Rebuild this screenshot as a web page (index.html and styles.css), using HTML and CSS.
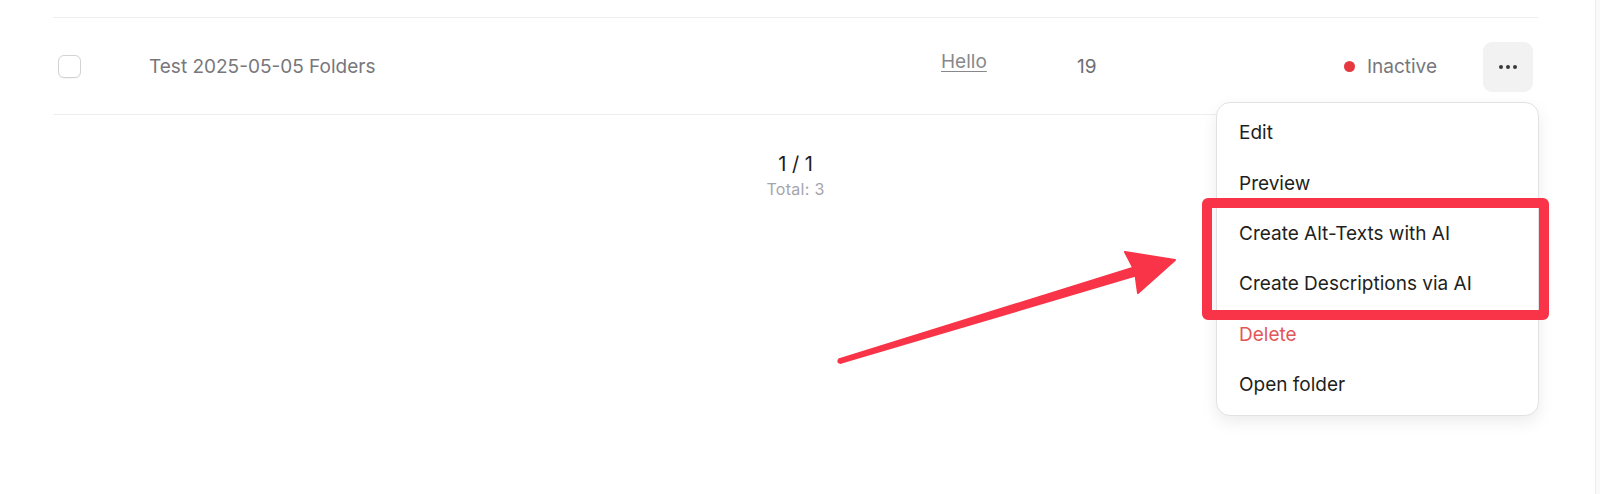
FILE: index.html
```html
<!DOCTYPE html>
<html lang="en">
<head>
<meta charset="utf-8">
<title>Folders</title>
<link rel="stylesheet" href="styles.css">
</head>
<body>
<div class="page">
  <main class="content">
    <div class="table">
      <div class="row">
        <div class="cell cell-check"><span class="checkbox"></span></div>
        <div class="cell cell-name">Test 2025-05-05 Folders</div>
        <div class="cell cell-link"><a class="link" href="#">Hello</a></div>
        <div class="cell cell-count">19</div>
        <div class="cell cell-status"><span class="dot"></span><span>Inactive</span></div>
        <div class="cell cell-actions">
          <button class="more" type="button" aria-label="More">
            <svg width="18" height="4" viewBox="0 0 18 4"><circle cx="2" cy="2" r="2"/><circle cx="9" cy="2" r="2"/><circle cx="16" cy="2" r="2"/></svg>
          </button>
          <div class="menu">
            <div class="menu-item">Edit</div>
            <div class="menu-item">Preview</div>
            <div class="menu-item">Create Alt-Texts with AI</div>
            <div class="menu-item">Create Descriptions via AI</div>
            <div class="menu-item danger">Delete</div>
            <div class="menu-item">Open folder</div>
          </div>
        </div>
      </div>
    </div>
    <div class="pager">
      <div class="pager-pages">1 / 1</div>
      <div class="pager-total">Total: 3</div>
    </div>
  </main>
  <div class="gutter"></div>
  <div class="highlight"></div>
  <svg class="arrow" width="1600" height="494" viewBox="0 0 1600 494">
    <polygon points="839.4,359.1 1133.2,267.8 1125,252 1175,260 1138,293 1135.6,275.5 840.6,362.9" fill="#f93448" stroke="#f93448" stroke-width="2" stroke-linejoin="round"/>
    <circle cx="840" cy="361" r="2.6" fill="#f93448"/>
  </svg>
</div>
</body>
</html>
```

FILE: styles.css
```css
* { box-sizing: border-box; }
html, body { margin: 0; padding: 0; background: #ffffff; }
body {
  font-family: Inter, "Noto Sans", "Liberation Sans", sans-serif;
  color: #1c1c1e;
  width: 1600px;
  height: 494px;
  overflow: hidden;
}
.page {
  position: relative;
  display: flex;
  height: 494px;
}
.content {
  flex: 1;
  padding-top: 17px;
}
.gutter {
  width: 5px;
  background: #fafafa;
  border-left: 1px solid #ececec;
}
.table {
  margin-left: 53px;
  width: 1485px;
  border-top: 1px solid #ededed;
}
.row {
  display: grid;
  grid-template-columns: 96px 792px 136px 1fr auto 50px;
  align-items: center;
  height: 97px;
  padding-top: 1px;
  padding-right: 5px;
  border-bottom: 1px solid #ededed;
  font-size: 19px;
  color: #77777c;
}
.cell-check { padding-left: 5px; display: flex; align-items: center; }
.checkbox {
  width: 23px;
  height: 23px;
  border: 1.5px solid #d3d3d7;
  border-radius: 6px;
  background: #fff;
  box-shadow: 0 1px 1px rgba(0,0,0,0.04);
}
.cell-name { color: #77777c; }
.cell-link { margin-bottom: 10px; }
.link { color: #88888c; text-decoration: underline; text-underline-offset: 3px; text-decoration-thickness: 1px; }
.cell-count { color: #6e6e73; }
.cell-status {
  display: flex;
  align-items: center;
  gap: 12px;
  margin-right: 46px;
  color: #77777c;
}
.dot { width: 11px; height: 11px; border-radius: 50%; background: #e5393f; }
.cell-actions { position: relative; height: 50px; }
.more {
  width: 50px;
  height: 50px;
  border: 0;
  border-radius: 9px;
  background: #f2f2f3;
  display: flex;
  align-items: center;
  justify-content: center;
  padding: 0;
}
.more svg { fill: #3a3a3c; }
.menu {
  position: absolute;
  top: 60px;
  right: -6px;
  width: 323px;
  padding: 5px 0;
  background: #fff;
  border: 1px solid #e2e2e5;
  border-radius: 14px;
  box-shadow: 0 6px 16px rgba(0,0,0,0.08);
  z-index: 2;
}
.menu-item {
  height: 50.4px;
  display: flex;
  align-items: center;
  padding-left: 22px;
  font-size: 19px;
  color: #1f1f21;
}
.menu-item.danger { color: #e2575a; }
.pager {
  display: flex;
  flex-direction: column;
  align-items: center;
  margin-left: 53px;
  width: 1485px;
  padding-top: 37px;
}
.pager-pages { font-size: 20px; line-height: 24px; color: #1c1c1e; }
.pager-total { margin-top: 2px; font-size: 16px; line-height: 22px; color: #a3a5ae; letter-spacing: 0.3px; }
.highlight {
  position: absolute;
  left: 1202px;
  top: 198px;
  width: 347px;
  height: 122px;
  border: 10px solid #f93448;
  border-radius: 6px;
  z-index: 3;
}
.arrow {
  position: absolute;
  left: 0;
  top: 0;
  pointer-events: none;
  z-index: 3;
}
```
